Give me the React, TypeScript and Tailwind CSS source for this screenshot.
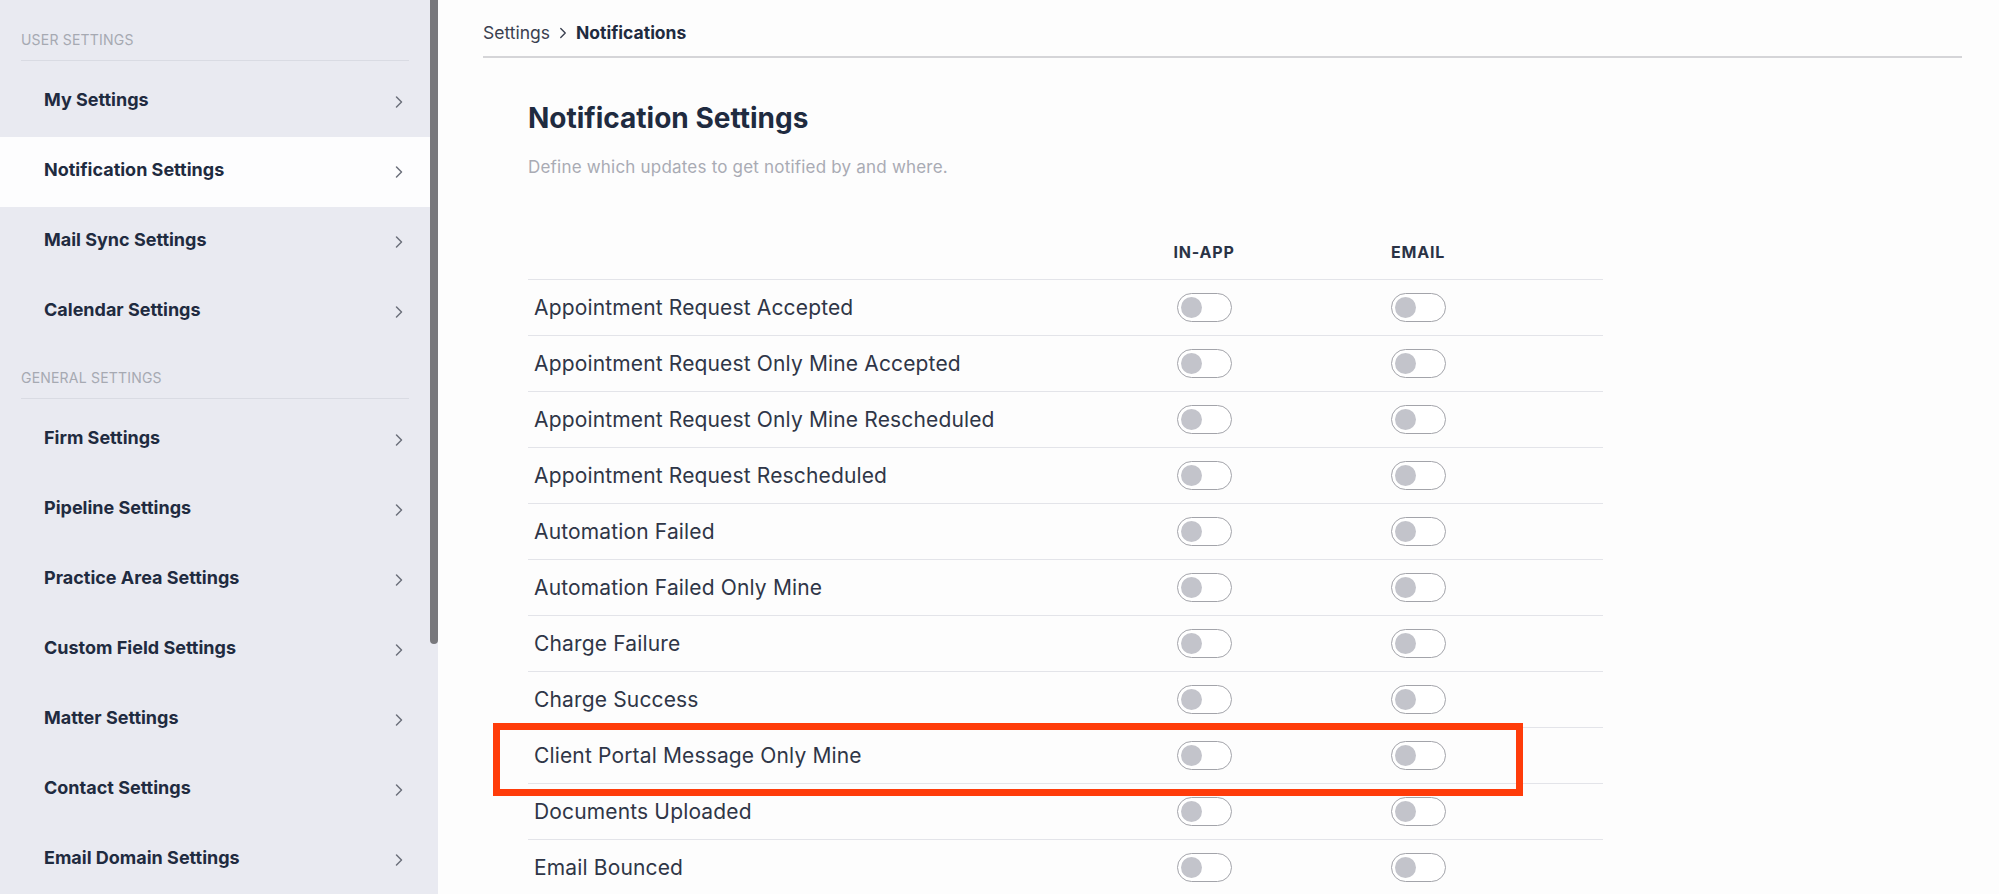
import { ChevronRight } from 'lucide-react';

const userSettings = ['My Settings', 'Notification Settings', 'Mail Sync Settings', 'Calendar Settings'];

const generalSettings = [
  'Firm Settings',
  'Pipeline Settings',
  'Practice Area Settings',
  'Custom Field Settings',
  'Matter Settings',
  'Contact Settings',
  'Email Domain Settings',
];

const notifications = [
  'Appointment Request Accepted',
  'Appointment Request Only Mine Accepted',
  'Appointment Request Only Mine Rescheduled',
  'Appointment Request Rescheduled',
  'Automation Failed',
  'Automation Failed Only Mine',
  'Charge Failure',
  'Charge Success',
  'Client Portal Message Only Mine',
  'Documents Uploaded',
  'Email Bounced',
];

function Toggle() {
  return (
    <div className="flex h-[29px] w-[55px] items-center rounded-full border-[1.5px] border-[#a3a4aa] bg-white pl-[3px]">
      <div className="size-[21px] rounded-full bg-[#c3c4cb]" />
    </div>
  );
}

function SidebarSection({ label, items, active, first }: { label: string; items: string[]; active?: string; first?: boolean }) {
  return (
    <div className={first ? 'pt-[30px]' : 'pt-[21px]'}>
      <div className="px-[21px]">
        <p className="h-[20px] text-[14px] leading-[20px] tracking-[0.2px] text-[#a6a9b2]">{label}</p>
        <div className="mt-[10px] h-px bg-[#d9dbe3]" />
      </div>
      <div className="mt-[6px]">
        {items.map((item) => (
          <div
            key={item}
            className={`flex h-[70px] items-center justify-between pl-[44px] pr-[21px] ${item === active ? 'bg-[#fdfdfe]' : ''}`}
          >
            <span className="pb-[5px] text-[18px] font-bold text-[#1f2b40]">{item}</span>
            <ChevronRight size={20} strokeWidth={1.8} className="text-[#6c707b]" />
          </div>
        ))}
      </div>
    </div>
  );
}

export default function App() {
  return (
    <div className="flex h-[894px] w-full overflow-hidden bg-[#fdfdfd] font-['Inter',sans-serif] text-[#1f2b40]">
      {/* Sidebar */}
      <aside className="flex w-[438px] shrink-0 bg-[#e9eaf1]">
        <div className="flex-1">
          <SidebarSection label="USER SETTINGS" items={userSettings} active="Notification Settings" first />
          <SidebarSection label="GENERAL SETTINGS" items={generalSettings} />
        </div>
        <div className="w-[8px]">
          <div className="h-[644px] rounded-b-full bg-[#78787c]" />
        </div>
      </aside>

      {/* Main */}
      <main className="flex-1 pl-[45px] pr-[37px]">
        <div className="flex h-[58px] items-start border-b-2 border-[#d5d5d8] pt-[21px]">
          <p className="flex items-center text-[17.5px] leading-[24px]">
            <span className="text-[#3a4050]">Settings</span>
            <ChevronRight size={18} strokeWidth={1.8} className="mx-[4px] text-[#3a4050]" />
            <span className="font-bold text-[#1f2b40]">Notifications</span>
          </p>
        </div>

        <div className="ml-[45px] w-[1075px]">
          <h1 className="mt-[42px] text-[28px] font-bold leading-[36px] text-[#1f2b40]">Notification Settings</h1>
          <p className="mt-[19px] text-[17px] leading-[24px] tracking-[0.2px] text-[#a9abb4]">
            Define which updates to get notified by and where.
          </p>

          <div className="mt-[45px]">
            <div className="grid h-[56px] grid-cols-[569px_214px_214px_1fr] items-center border-b border-[#e3e4e9]">
              <div />
              <div className="text-center text-[16px] font-bold tracking-[0.8px] text-[#2a3346]">IN-APP</div>
              <div className="text-center text-[16px] font-bold tracking-[0.8px] text-[#2a3346]">EMAIL</div>
              <div />
            </div>
            {notifications.map((name) => (
              <div
                key={name}
                className="relative grid h-[56px] grid-cols-[569px_214px_214px_1fr] items-center border-b border-[#e3e4e9]"
              >
                <span className="pl-[6px] text-[21px] tracking-[0.15px] text-[#2f3647]">{name}</span>
                <div className="flex justify-center">
                  <Toggle />
                </div>
                <div className="flex justify-center">
                  <Toggle />
                </div>
                <div />
                {name === 'Client Portal Message Only Mine' && (
                  <div className="absolute left-[-35px] top-[-5px] h-[73px] w-[1030px] border-[7px] border-[#ff3c0a]" />
                )}
              </div>
            ))}
          </div>
        </div>
      </main>
    </div>
  );
}
